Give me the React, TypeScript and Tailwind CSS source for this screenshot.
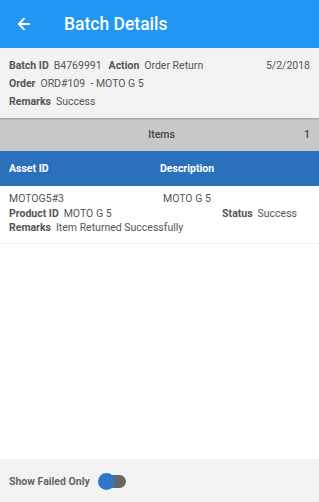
import { ArrowLeft } from "lucide-react";

export default function App() {
    return (
        <div className="w-[319px] h-[502px] flex flex-col bg-white text-[#555] font-['Roboto',sans-serif] overflow-hidden">
            <div className="h-[48px] bg-[#2196f3] flex items-center text-white shrink-0">
                <ArrowLeft className="ml-[15px] w-[18px] h-[18px]" strokeWidth={2.5} />
                <span className="ml-[31px] text-[17.5px] font-medium">Batch Details</span>
            </div>

            <div className="h-[70px] bg-[#f2f2f2] px-[9px] pt-[9px] text-[10.5px] leading-[18px] shrink-0 shadow-[0_1px_2px_rgba(0,0,0,0.25)] relative">
                <div className="flex">
                    <span className="font-bold">Batch ID</span>
                    <span className="ml-[5px]">B4769991</span>
                    <span className="ml-[7px] font-bold">Action</span>
                    <span className="ml-[5px]">Order Return</span>
                    <span className="ml-auto">5/2/2018</span>
                </div>
                <div className="flex">
                    <span className="font-bold">Order</span>
                    <span className="ml-[5px]">ORD#109&nbsp; - MOTO G 5</span>
                </div>
                <div className="flex">
                    <span className="font-bold">Remarks</span>
                    <span className="ml-[5px]">Success</span>
                </div>
            </div>

            <div className="h-[33px] bg-[#c8c8c8] flex items-center px-[9px] text-[10.5px] text-[#444] font-medium shrink-0">
                <span className="flex-1 text-center pl-[10px]">Items</span>
                <span>1</span>
            </div>

            <div className="h-[35px] bg-[#2b70bb] flex items-center px-[9px] text-[10.5px] text-white font-bold shrink-0">
                <span className="w-[151px]">Asset ID</span>
                <span>Description</span>
            </div>

            <div className="px-[9px] pt-[6px] pb-[7px] text-[10.5px] leading-[14.5px] border-b border-[#eee] shrink-0">
                <div className="flex">
                    <span className="w-[154px]">MOTOG5#3</span>
                    <span>MOTO G 5</span>
                </div>
                <div className="flex">
                    <span className="font-bold">Product ID</span>
                    <span className="ml-[5px]">MOTO G 5</span>
                    <span className="ml-auto font-bold">Status</span>
                    <span className="ml-[5px] mr-[13px]">Success</span>
                </div>
                <div className="flex">
                    <span className="font-bold">Remarks</span>
                    <span className="ml-[5px]">Item Returned Successfully</span>
                </div>
            </div>

            <div className="flex-1" />

            <div className="h-[43px] bg-[#f2f2f2] flex items-center px-[9px] pt-[2px] shrink-0">
                <span className="text-[10.5px] font-bold text-[#666]">Show Failed Only</span>
                <div className="ml-[9px] relative w-[27px] h-[13px] rounded-full bg-[#666]">
                    <div className="absolute left-[-1px] top-[-2px] w-[17px] h-[17px] rounded-full bg-[#2f77c4]" />
                </div>
            </div>
        </div>
    );
}
